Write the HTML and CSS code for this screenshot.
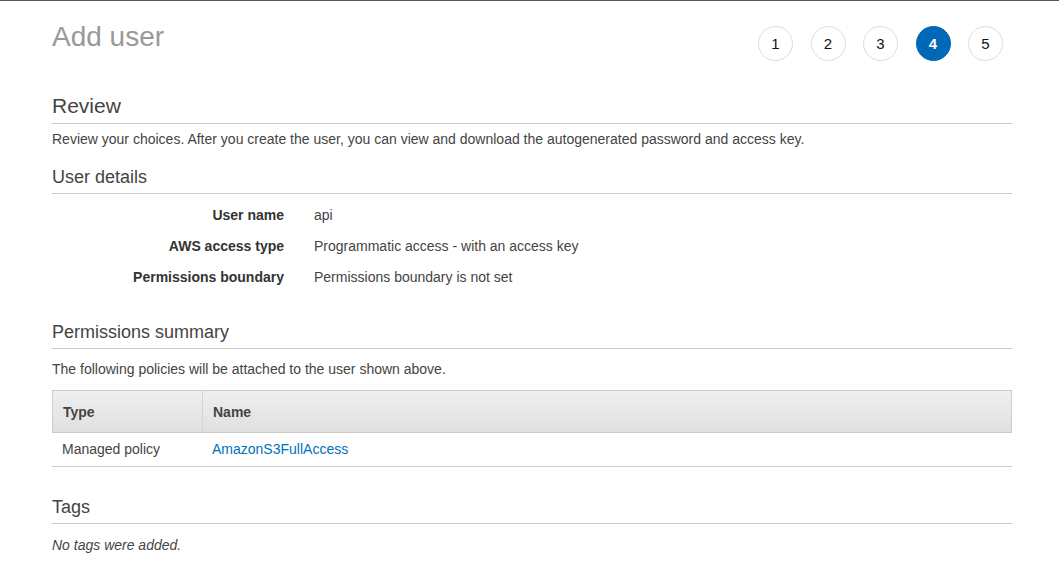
FILE: index.html
```html
<!DOCTYPE html>
<html lang="en">
<head>
<meta charset="utf-8">
<title>Add user</title>
<link rel="stylesheet" href="styles.css">
</head>
<body>
<div class="page">
  <header class="header">
    <h1 class="title">Add user</h1>
    <ol class="steps">
      <li class="step">1</li>
      <li class="step">2</li>
      <li class="step">3</li>
      <li class="step step-active">4</li>
      <li class="step">5</li>
    </ol>
  </header>

  <h2 class="review-title">Review</h2>
  <p class="desc desc-review">Review your choices. After you create the user, you can view and download the autogenerated password and access key.</p>

  <h3 class="section-title st-details">User details</h3>
  <dl class="details">
    <dt class="d-label">User name</dt>
    <dd class="d-value">api</dd>
    <dt class="d-label">AWS access type</dt>
    <dd class="d-value">Programmatic access - with an access key</dd>
    <dt class="d-label">Permissions boundary</dt>
    <dd class="d-value">Permissions boundary is not set</dd>
  </dl>

  <h3 class="section-title st-perms">Permissions summary</h3>
  <p class="desc desc-perms">The following policies will be attached to the user shown above.</p>

  <div class="tbl">
    <div class="tbl-head">
      <div class="th th-type">Type</div>
      <div class="th th-name">Name</div>
    </div>
    <div class="tbl-row">
      <div class="td">Managed policy</div>
      <div class="td"><a class="link" href="#">AmazonS3FullAccess</a></div>
    </div>
  </div>

  <h3 class="section-title st-tags">Tags</h3>
  <p class="desc desc-tags">No tags were added.</p>
</div>
</body>
</html>
```

FILE: styles.css
```css
* { box-sizing: border-box; }
html, body { margin: 0; padding: 0; background: #fff; }
body {
  border-top: 1px solid #545b64;
  font-family: "Liberation Sans", Arial, Helvetica, sans-serif;
  color: #444;
}
.page {
  width: 960px;
  margin-left: 52px;
}
.header {
  display: flex;
  justify-content: space-between;
  align-items: flex-start;
  padding-top: 20px;
}
.title {
  margin: 0;
  font-size: 28px;
  line-height: 32px;
  font-weight: normal;
  color: #999;
}
.steps {
  list-style: none;
  margin: 5px 9px 0 0;
  padding: 0;
  display: flex;
  gap: 17.5px;
}
.step {
  width: 35px;
  height: 35px;
  border: 1px solid #ddd;
  border-radius: 50%;
  display: flex;
  align-items: center;
  justify-content: center;
  font-size: 15px;
  color: #111;
}
.step-active {
  background: #0168b8;
  border-color: #0168b8;
  color: #fff;
  font-weight: bold;
}
.review-title {
  margin: 33px 0 0;
  font-size: 21px;
  line-height: 24px;
  font-weight: normal;
  color: #444;
  padding-bottom: 5px;
  border-bottom: 1px solid #ccc;
}
.desc {
  margin: 0;
  font-size: 14px;
  line-height: 20px;
  color: #444;
}
.desc-review { margin-top: 5px; }
.section-title {
  margin: 0;
  font-size: 18px;
  line-height: 22px;
  font-weight: normal;
  color: #444;
  padding-bottom: 5px;
  border-bottom: 1px solid #ccc;
}
.st-details { margin-top: 17px; }
.details {
  margin: 6px 0 0;
  display: grid;
  grid-template-columns: 232px 1fr;
  column-gap: 30px;
  font-size: 14px;
  line-height: 20px;
}
.d-label {
  text-align: right;
  font-weight: bold;
  color: #333;
  padding: 5px 0 6px;
}
.d-value {
  margin: 0;
  padding: 5px 0 6px;
  color: #444;
}
.st-perms { margin-top: 28px; }
.desc-perms { margin-top: 10px; }
.tbl {
  margin-top: 11px;
  font-size: 14px;
  line-height: 20px;
}
.tbl-head {
  display: grid;
  grid-template-columns: 149px 1fr;
  border: 1px solid #ccc;
  background: linear-gradient(#efefef, #e0e0e0);
}
.th {
  padding: 11px 10px 10px;
  font-weight: bold;
  color: #444;
}
.th-name { border-left: 1px solid #d4d4d4; }
.tbl-row {
  display: grid;
  grid-template-columns: 150px 1fr;
  border-bottom: 1px solid #ccc;
}
.td {
  padding: 6px 10px 7px;
  color: #444;
}
.link {
  color: #0073bb;
  text-decoration: none;
}
.st-tags { margin-top: 29px; }
.desc-tags {
  margin-top: 11px;
  font-style: italic;
}
```
